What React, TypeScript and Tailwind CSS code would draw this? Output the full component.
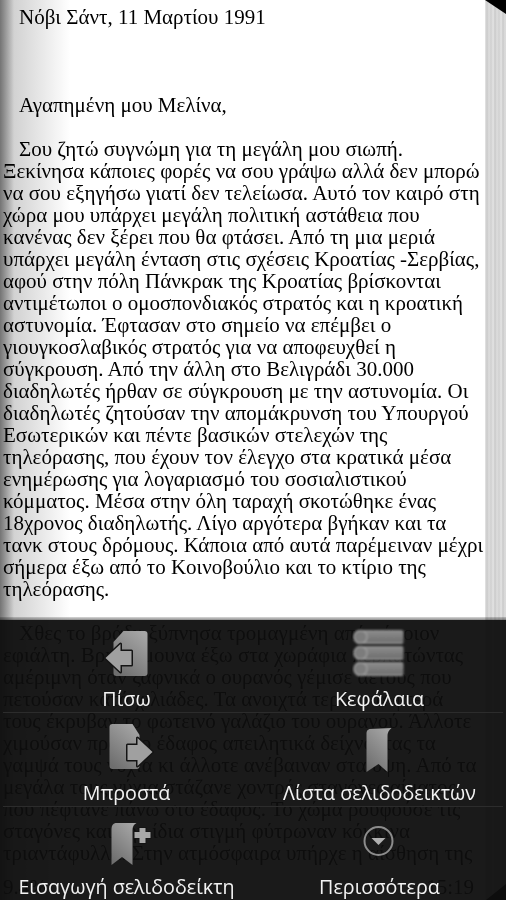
const LINES = [
  'Νόβι Σάντ, 11 Μαρτίου 1991',
  '',
  '',
  '',
  'Αγαπημένη μου Μελίνα,',
  '',
  'Σου ζητώ συγνώμη για τη μεγάλη μου σιωπή.',
  'Ξεκίνησα κάποιες φορές να σου γράψω αλλά δεν μπορώ',
  'να σου εξηγήσω γιατί δεν τελείωσα. Αυτό τον καιρό στη',
  'χώρα μου υπάρχει μεγάλη πολιτική αστάθεια που',
  'κανένας δεν ξέρει που θα φτάσει. Από τη μια μεριά',
  'υπάρχει μεγάλη ένταση στις σχέσεις Κροατίας -Σερβίας,',
  'αφού στην πόλη Πάνκρακ της Κροατίας βρίσκονται',
  'αντιμέτωποι ο ομοσπονδιακός στρατός και η κροατική',
  'αστυνομία. Έφτασαν στο σημείο να επέμβει ο',
  'γιουγκοσλαβικός στρατός για να αποφευχθεί η',
  'σύγκρουση. Από την άλλη στο Βελιγράδι 30.000',
  'διαδηλωτές ήρθαν σε σύγκρουση με την αστυνομία. Οι',
  'διαδηλωτές ζητούσαν την απομάκρυνση του Υπουργού',
  'Εσωτερικών και πέντε βασικών στελεχών της',
  'τηλεόρασης, που έχουν τον έλεγχο στα κρατικά μέσα',
  'ενημέρωσης για λογαριασμό του σοσιαλιστικού',
  'κόμματος. Μέσα στην όλη ταραχή σκοτώθηκε ένας',
  '18χρονος διαδηλωτής. Λίγο αργότερα βγήκαν και τα',
  'τανκ στους δρόμους. Κάποια από αυτά παρέμειναν μέχρι',
  'σήμερα έξω από το Κοινοβούλιο και το κτίριο της',
  'τηλεόρασης.',
  '',
  'Χθες το βράδυ ξύπνησα τρομαγμένη από κάποιον',
  'εφιάλτη. Βρισκόμουνα έξω στα χωράφια περπατώντας',
  'αμέριμνη όταν ξαφνικά ο ουρανός γέμισε αετούς που',
  'πετούσαν κατά χιλιάδες. Τα ανοιχτά τεράστια φτερά',
  'τους έκρυβαν το φωτεινό γαλάζιο του ουρανού. Άλλοτε',
  'χιμούσαν προς το έδαφος απειλητικά δείχνοντας τα',
  'γαμψά τους νύχια κι άλλοτε ανέβαιναν στα ύψη. Από τα',
  'μεγάλα τους νύχια στάζανε χοντρές σταγόνες αίματος',
  'που πέφτανε πάνω στο έδαφος. Το χώμα ρουφούσε τις',
  'σταγόνες και την ίδια στιγμή φύτρωναν κόκκινα',
  'τριαντάφυλλα. Στην ατμόσφαιρα υπήρχε η αίσθηση της',
];

const INDENTED = new Set([0, 4, 6, 28]);

const IconGrad = ({ id }: { id: string }) => (
  <defs>
    <linearGradient id={id} x1="0.8" y1="0" x2="0.2" y2="1">
      <stop offset="0" stopColor="#a6a6a6" />
      <stop offset="1" stopColor="#6e6e6e" />
    </linearGradient>
  </defs>
);

const BackIcon = () => (
  <svg width="56" height="60" viewBox="98.5 626 56 60">
    <IconGrad id="back" />
    <path d="M123 631H144Q147 631 147 634V673Q147 676 144 676H116Q113 676 113 673V642Z" fill="url(#back)" />
    <path
      d="M105 658L120 644V651H131V665H120V672Z"
      fill="#a0a0a0"
      stroke="#141414"
      strokeWidth="3"
      strokeLinejoin="round"
      paintOrder="stroke"
    />
  </svg>
);

const ForwardIcon = () => (
  <svg width="56" height="60" viewBox="98.5 720 56 60">
    <IconGrad id="fwd" />
    <path d="M112 724H132L139 735V766Q139 769 136 769H112Q109 769 109 766V727Q109 724 112 724Z" fill="url(#fwd)" />
    <path
      d="M152 752L137 738V745H127V760H137V766Z"
      fill="#a0a0a0"
      stroke="#141414"
      strokeWidth="3"
      strokeLinejoin="round"
      paintOrder="stroke"
    />
  </svg>
);

const AddBookmarkIcon = () => (
  <svg width="56" height="60" viewBox="98.5 814 56 60">
    <IconGrad id="add" />
    <path d="M115 823H136Q132 825 132 830V865L121.5 857L111 865V829Q111 824 115 823Z" fill="url(#add)" />
    <path
      d="M139 828H145V832H150V838H145V843H139V838H134V832H139Z"
      fill="#a8a8a8"
      stroke="#141414"
      strokeWidth="2"
      paintOrder="stroke"
    />
  </svg>
);

const ChaptersIcon = () => (
  <svg width="56" height="60" viewBox="351.5 626 56 60">
    <defs>
      <linearGradient id="bar" x1="0" y1="0" x2="0" y2="1">
        <stop offset="0" stopColor="#8f8f8f" />
        <stop offset="0.85" stopColor="#6f6f6f" />
        <stop offset="1" stopColor="#a8a8a8" />
      </linearGradient>
      <filter id="soft">
        <feGaussianBlur stdDeviation="1" />
      </filter>
    </defs>
    {[630, 646, 662].map((y) => (
      <g key={y} filter="url(#soft)">
        <rect x="356" y={y} width="47" height="14" rx="2" fill="url(#bar)" />
        <circle cx="360" cy={y + 7} r="6.5" fill="#7c7c7c" stroke="#9a9a9a" strokeWidth="1.5" />
      </g>
    ))}
  </svg>
);

const BookmarksIcon = () => (
  <svg width="56" height="60" viewBox="351.5 720 56 60">
    <IconGrad id="list" />
    <path d="M369 729L391 728Q387 731 387 736V772L378 764L366 772V733Q366 730 369 729Z" fill="url(#list)" />
  </svg>
);

const MoreIcon = () => (
  <svg width="56" height="60" viewBox="351.5 814 56 60">
    <circle cx="378" cy="841" r="14" fill="none" stroke="#8c8c8c" strokeWidth="2" />
    <path d="M371 838H385L378 845Z" fill="#b0b0b0" />
  </svg>
);

const ITEMS = [
  { label: 'Πίσω', icon: <BackIcon /> },
  { label: 'Κεφάλαια', icon: <ChaptersIcon /> },
  { label: 'Μπροστά', icon: <ForwardIcon /> },
  { label: 'Λίστα σελιδοδεικτών', icon: <BookmarksIcon /> },
  { label: 'Εισαγωγή σελιδοδείκτη', icon: <AddBookmarkIcon /> },
  { label: 'Περισσότερα', icon: <MoreIcon /> },
];

export default function App() {
  return (
    <div className="relative flex h-[900px] w-[506px] overflow-hidden bg-white font-['Liberation_Serif',serif] text-black">
      {/* page text */}
      <div className="relative h-full w-[485px] pl-[3px] pt-[6px] text-[21px] leading-[22px]">
        {LINES.map((line, i) => (
          <div key={i} className={`h-[22px] whitespace-nowrap blur-[0.3px] ${INDENTED.has(i) ? 'pl-[16px]' : ''}`}>
            {line}
          </div>
        ))}
        <div className="absolute inset-y-0 left-0 w-[70px] bg-gradient-to-r from-[#747474] via-[#d2d2d2] via-20% to-white mix-blend-multiply" />
      </div>

      {/* stack of pages on the right edge */}
      <div className="relative h-full w-[21px] bg-[repeating-linear-gradient(90deg,#e6e6e6_0px,#c9c9c9_2px,#dedede_4px,#d0d0d0_6px,#e2e2e2_8px)]">
        <div className="absolute left-0 top-0 h-[14px] w-[21px] bg-black [clip-path:polygon(0_0,100%_0,100%_100%)]" />
      </div>

      {/* footer of the page, seen through the menu */}
      <div className="absolute bottom-[2px] left-[3px] right-[32px] flex justify-between text-[21px] leading-[22px]">
        <span>9.4%</span>
        <span>15:19</span>
      </div>
      <div className="absolute bottom-0 right-0 h-[16px] w-[20px] bg-black [clip-path:polygon(100%_0,100%_100%,0_100%)]" />

      {/* options menu */}
      <div className="absolute inset-x-0 bottom-[280px] h-[3px] bg-gradient-to-b from-[#d8d8d8] to-[#8f8f8f] mix-blend-multiply" />
      <div className="absolute inset-x-0 bottom-0 grid h-[280px] grid-cols-2 grid-rows-[92px_94px_94px] bg-[#0e0e0e]/95 font-['Open_Sans',sans-serif] text-[#f2f2f2]">
        {ITEMS.map((item) => (
          <div key={item.label} className="flex flex-col items-center justify-end">
            {item.icon}
            <div className="h-[26px] whitespace-nowrap text-[19.7px] leading-[26px]">{item.label}</div>
          </div>
        ))}
        <div className="absolute inset-x-[3px] top-[92px] h-px bg-[#2c2c2c]" />
        <div className="absolute inset-x-[3px] top-[186px] h-px bg-[#2c2c2c]" />
      </div>
    </div>
  );
}
